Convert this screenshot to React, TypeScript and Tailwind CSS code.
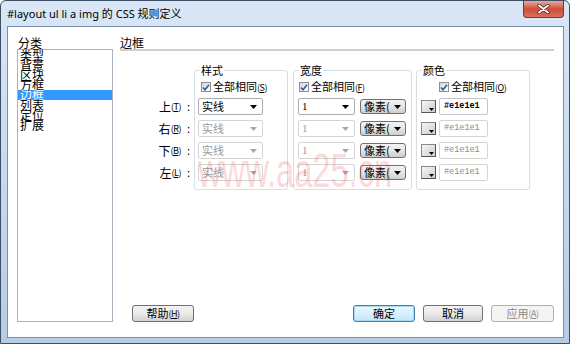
import React from 'react'

const ROWS = [
  { label: '上', key: 'T' },
  { label: '右', key: 'R' },
  { label: '下', key: 'B' },
  { label: '左', key: 'L' },
]

const CATS = ['类型', '背景', '区块', '方框', '边框', '列表', '定位', '扩展']

function Caret({ gray }: { gray?: boolean }) {
  return (
    <svg width="7" height="4" viewBox="0 0 7 4">
      <path d="M0 0h7L3.5 4z" fill={gray ? '#a8a8a8' : '#000'} />
    </svg>
  )
}

// mnemonic like (T)
function Mn({ k }: { k: string }) {
  return (
    <span className="text-[9px] tracking-[-0.5px]">
      (<span className="underline">{k}</span>)
    </span>
  )
}

function Check({ text, k }: { text: string; k: string }) {
  return (
    <div className="flex h-[12px] items-center gap-[2px]">
      <span className="flex size-[10px] items-center justify-center border border-[#8e8f8f] bg-gradient-to-br from-[#d6d6d6] to-white">
        <svg width="8" height="7" viewBox="0 0 8 7">
          <path d="M1 3.4l2 2.3L7 .8" stroke="#2a5ca8" strokeWidth="1.6" fill="none" />
        </svg>
      </span>
      <span className="leading-[12px]">
        {text}
        <Mn k={k} />
      </span>
    </div>
  )
}

function Select({ value, disabled, serif, w }: { value: string; disabled?: boolean; serif?: boolean; w: string }) {
  return (
    <div
      className={`flex h-[17px] items-center justify-between rounded-[2px] border bg-white pl-[3px] pr-[5px] ${w} ${
        disabled ? 'border-[#d4d4d4] text-[#9a9a9a]' : 'border-[#abadb3] text-black'
      }`}
    >
      <span className={serif ? "font-['Liberation_Serif',serif] text-[11px]" : ''}>{value}</span>
      <Caret gray={disabled} />
    </div>
  )
}

function UnitBtn() {
  return (
    <div className="mt-[1px] flex h-[15px] w-[46px] items-center justify-between rounded-[3px] border border-[#707070] bg-gradient-to-b from-[#f3f3f3] via-[#e6e6e6] to-[#cfcfcf] pl-[3px] pr-[4px]">
      <span className="leading-[13px]">像素(</span>
      <Caret />
    </div>
  )
}

function Swatch() {
  return (
    <div className="relative mt-[2px] h-[13px] w-[15px] border border-[#8a8a8a] border-b-[#555] border-r-[#555] bg-gradient-to-br from-[#f7f7f7] to-[#cdcdcd]">
      <svg className="absolute bottom-[1px] right-[1px]" width="5" height="3" viewBox="0 0 5 3">
        <path d="M0 0h5L2.5 3z" fill="#000" />
      </svg>
    </div>
  )
}

function ColorInput({ disabled }: { disabled?: boolean }) {
  return (
    <div
      className={`flex h-[17px] w-[49px] items-center rounded-[2px] border bg-white pl-[4px] font-['Liberation_Mono',monospace] text-[8.5px] ${
        disabled ? 'border-[#d4d4d4] text-[#8c8c8c]' : 'border-[#c2c6cc] font-bold text-black'
      }`}
    >
      #e1e1e1
    </div>
  )
}

function Group({ title, className, children }: { title: string; className: string; children: React.ReactNode }) {
  return (
    <div className={`relative flex h-[120px] flex-col rounded-[3px] border border-[#d5dfe5] pt-[10px] ${className}`}>
      <span className="absolute -top-[7px] left-[5px] bg-white px-[1px] leading-[12px]">{title}</span>
      {children}
    </div>
  )
}

function Button({ children, className }: { children: React.ReactNode; className: string }) {
  return (
    <div className={`flex h-[17px] items-center justify-center rounded-[3px] border leading-[13px] ${className}`}>
      {children}
    </div>
  )
}

export default function App() {
  return (
    <div className="relative flex h-[344px] w-[570px] flex-col overflow-hidden rounded-t-[6px] border border-[#3d4f66] bg-gradient-to-b from-[#d9e7f6] via-[#c6daef] to-[#b6cce4] font-['Noto_Sans_CJK_SC','Noto_Sans',sans-serif] text-[11px] text-black">
      {/* title bar */}
      <div className="flex h-[25px] shrink-0">
        <div className="flex flex-1 items-center pl-[6px] pt-[1px] font-['Noto_Sans','Noto_Sans_CJK_SC',sans-serif] text-[11px]">
          #layout ul li a img 的 CSS 规则定义
        </div>
        <div className="mr-[5px] flex h-[17px] w-[41px] items-center justify-center rounded-b-[4px] border border-t-0 border-[#8a2f24] bg-gradient-to-b from-[#e9a899] via-[#cf4d3b] to-[#d86f5d]">
          <svg width="13" height="10" viewBox="0 0 13 10">
            <path d="M2 1.5l9 7M11 1.5l-9 7" stroke="#4a1a14" strokeWidth="3.4" strokeLinecap="round" />
            <path d="M2 1.5l9 7M11 1.5l-9 7" stroke="#fff" strokeWidth="2" strokeLinecap="round" />
          </svg>
        </div>
      </div>

      {/* client area */}
      <div className="mb-[5px] ml-[6px] mr-[5px] flex flex-1 border border-[#7d8fa6] bg-white">
        {/* categories */}
        <div className="ml-[9px] flex w-[96px] flex-col pb-[15px] pt-[10px]">
          <div className="h-[12px] pl-[1px] text-[12px] leading-[12px]">分类</div>
          <div className="flex-1 border border-[#a9b3bd]">
            {CATS.map((c) => (
              <div
                key={c}
                className={`h-[10px] pl-[2px] text-[12px] leading-[10px] ${c === '边框' ? 'bg-[#3399ff] text-white' : ''}`}
              >
                {c}
              </div>
            ))}
          </div>
        </div>

        {/* border panel */}
        <div className="ml-[7px] flex w-[434px] flex-col pb-[15px] pt-[10px]">
          <div className="h-[12px] text-[12px] leading-[12px]">边框</div>
          <div className="h-[2px] bg-[#d0d0d0]" />

          <div className="mt-[19px] flex">
            <div className="flex w-[74px] flex-col gap-[5px] pr-[4px] pt-[28px]">
              {ROWS.map((r) => (
                <div key={r.key} className="flex h-[17px] items-center justify-end">
                  <span className="text-[12px]">{r.label}</span>
                  <Mn k={r.key} />
                  <span className="ml-[6px]">:</span>
                </div>
              ))}
            </div>

            <Group title="样式" className="w-[94px] pl-[3px]">
              <div className="ml-[3px]">
                <Check text="全部相同" k="S" />
              </div>
              <div className="mt-[5px] flex flex-col gap-[5px]">
                {ROWS.map((r, i) => (
                  <Select key={r.key} value="实线" disabled={i > 0} w="w-[65px]" />
                ))}
              </div>
            </Group>

            <Group title="宽度" className="ml-[5px] w-[119px] pl-[4px]">
              <div className="ml-[1px]">
                <Check text="全部相同" k="F" />
              </div>
              <div className="mt-[5px] flex flex-col gap-[5px]">
                {ROWS.map((r, i) => (
                  <div key={r.key} className="flex h-[17px] gap-[5px]">
                    <Select value="1" serif disabled={i > 0} w="w-[57px]" />
                    <UnitBtn />
                  </div>
                ))}
              </div>
            </Group>

            <Group title="颜色" className="ml-[4px] w-[114px] pl-[4px]">
              <div className="ml-[18px]">
                <Check text="全部相同" k="O" />
              </div>
              <div className="mt-[5px] flex flex-col gap-[5px]">
                {ROWS.map((r, i) => (
                  <div key={r.key} className="flex h-[17px] gap-[3px]">
                    <Swatch />
                    <ColorInput disabled={i > 0} />
                  </div>
                ))}
              </div>
            </Group>
          </div>

          <div className="flex-1" />

          <div className="flex">
            <Button className="ml-[12px] w-[62px] border-[#707070] bg-gradient-to-b from-[#f2f2f2] via-[#ebebeb] to-[#d2d2d2]">
              帮助<Mn k="H" />
            </Button>
            <Button className="ml-auto w-[62px] border-[#3c7fb1] bg-gradient-to-b from-[#eaf6fd] via-[#d9f0fc] to-[#bee6fd] shadow-[inset_0_0_0_1px_#a7d8f5]">
              确定
            </Button>
            <Button className="ml-[8px] w-[60px] border-[#707070] bg-gradient-to-b from-[#f2f2f2] via-[#ebebeb] to-[#d2d2d2]">
              取消
            </Button>
            <Button className="ml-[8px] w-[63px] border-[#adb2b5] bg-[#f4f4f4] text-[#8a8a8a]">
              应用<Mn k="A" />
            </Button>
          </div>
        </div>
      </div>

      {/* watermark */}
      <div className="pointer-events-none absolute left-[197px] top-[146px] origin-left scale-x-[0.68] whitespace-nowrap font-['Liberation_Sans',sans-serif] text-[48px] leading-[48px] text-[rgba(230,60,60,0.2)]">
        www.aa25.cn
      </div>
    </div>
  )
}
